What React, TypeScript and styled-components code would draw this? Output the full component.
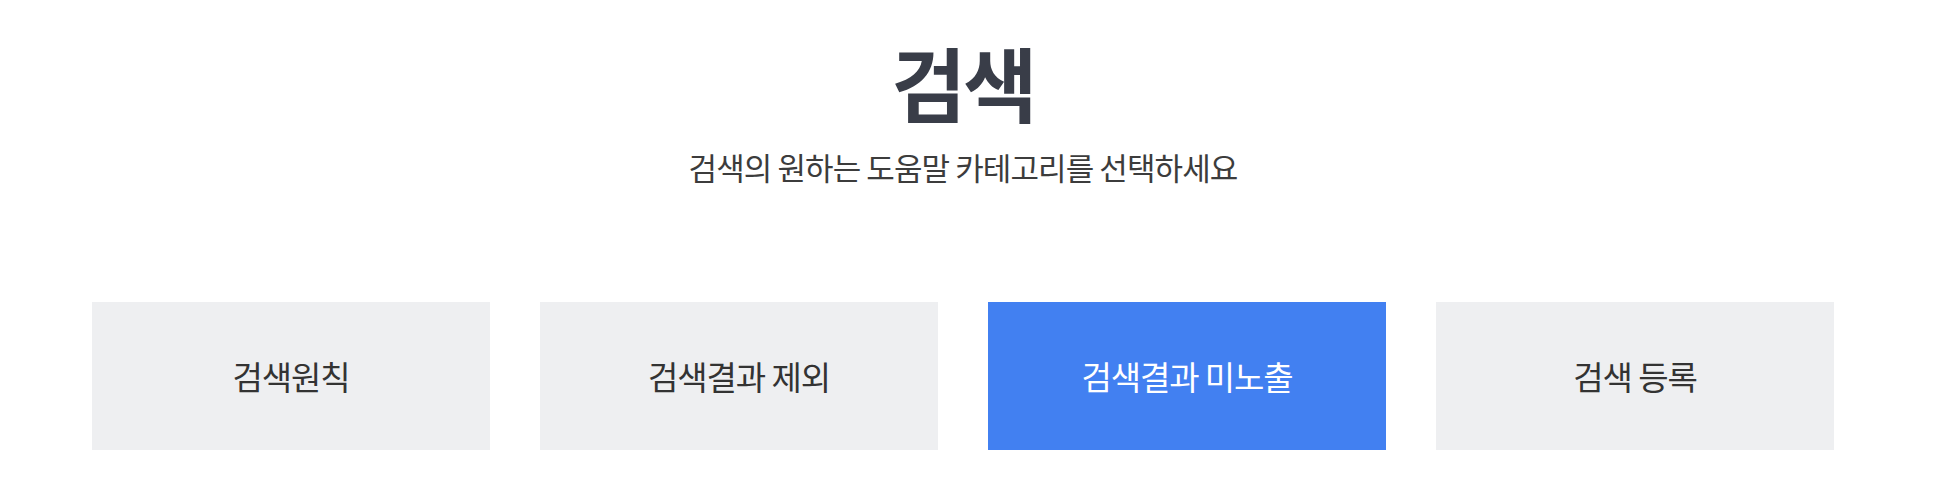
import React from 'react'
import styled, { createGlobalStyle } from 'styled-components'

const GlobalStyle = createGlobalStyle`
  body {
    margin: 0;
    background: #ffffff;
    font-family: "Noto Sans CJK KR", "Noto Sans", sans-serif;
  }
`

const Page = styled.div`
  width: 1956px;
  height: 480px;
  padding: 0 122px 0 92px;
  box-sizing: border-box;
  display: flex;
  flex-direction: column;
  align-items: center;
`

const Title = styled.h1`
  margin: 26px 0 0;
  font-size: 81px;
  line-height: 110px;
  font-weight: 700;
  letter-spacing: -3px;
  color: #393d48;
`

const Subtitle = styled.p`
  margin: 9px 0 0;
  font-size: 31px;
  line-height: 44px;
  font-weight: 400;
  letter-spacing: -0.9px;
  color: #3c3c3c;
`

const Tabs = styled.div`
  margin-top: 113px;
  width: 100%;
  display: grid;
  grid-template-columns: repeat(4, 1fr);
  gap: 50px;
`

const Tab = styled.button<{ $active?: boolean }>`
  height: 148px;
  border: none;
  margin: 0;
  padding: 0;
  display: flex;
  align-items: center;
  justify-content: center;
  font-family: inherit;
  font-size: 33px;
  letter-spacing: -1.1px;
  font-weight: 400;
  cursor: pointer;
  background: ${(p) => (p.$active ? '#4280f1' : '#eeeff1')};
  color: ${(p) => (p.$active ? '#ffffff' : '#333333')};
`

const tabs = ['검색원칙', '검색결과 제외', '검색결과 미노출', '검색 등록']

export default function App() {
  return (
    <>
      <GlobalStyle />
      <Page>
        <Title>검색</Title>
        <Subtitle>검색의 원하는 도움말 카테고리를 선택하세요</Subtitle>
        <Tabs>
          {tabs.map((t, i) => (
            <Tab key={t} $active={i === 2}>
              {t}
            </Tab>
          ))}
        </Tabs>
      </Page>
    </>
  )
}
